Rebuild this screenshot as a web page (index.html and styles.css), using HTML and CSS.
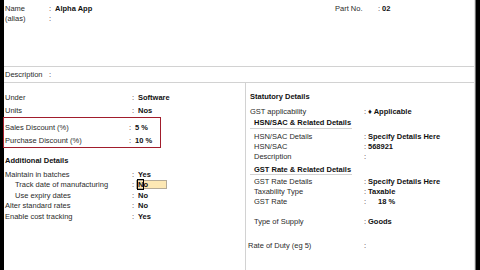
FILE: index.html
```html
<!DOCTYPE html>
<html>
<head>
<meta charset="utf-8">
<link rel="stylesheet" href="styles.css">
</head>
<body>
<div class="frame">
  <div class="bar-left"></div>
  <main class="sheet">
    <header class="head">
      <div class="hrow">
        <span class="hlbl">Name</span><span class="hcolon">:</span><b class="hval">Alpha App</b>
        <span class="plbl">Part No.</span><span class="pcolon">:</span><b>02</b>
      </div>
      <div class="hrow">
        <span class="hlbl">(alias)</span><span class="hcolon">:</span>
      </div>
    </header>
    <div class="desc">
      <span class="hlbl">Description</span><span class="hcolon">:</span>
    </div>
    <div class="cols">
      <section class="left">
        <div class="lrow r13"><span class="llbl">Under</span><span class="lcolon">:</span><b>Software</b></div>
        <div class="lrow r13"><span class="llbl">Units</span><span class="lcolon">:</span><b>Nos</b></div>
        <div class="redbox">
          <div class="lrow r13"><span class="llbl box">Sales Discount (%)</span><span class="lcolon">:</span><b>5 %</b></div>
          <div class="lrow r13"><span class="llbl box">Purchase Discount (%)</span><span class="lcolon">:</span><b>10 %</b></div>
        </div>
        <div class="lhead">Additional Details</div>
        <div class="lrow r10 first"><span class="llbl">Maintain in batches</span><span class="lcolon">:</span><b>Yes</b></div>
        <div class="lrow r10"><span class="llbl ind">Track date of manufacturing</span><span class="lcolon">:</span><span class="input"><b><span class="cursor">N</span>o</b></span></div>
        <div class="lrow r10"><span class="llbl ind">Use expiry dates</span><span class="lcolon">:</span><b>No</b></div>
        <div class="lrow r10"><span class="llbl">Alter standard rates</span><span class="lcolon">:</span><b>No</b></div>
        <div class="lrow r10"><span class="llbl">Enable cost tracking</span><span class="lcolon">:</span><b>Yes</b></div>
      </section>
      <section class="right">
        <div class="rhead">Statutory Details</div>
        <div class="rrow gstapp"><span class="rlbl">GST applicability</span><span class="rcolon">:</span><b><span class="dia">&#9830;</span> Applicable</b></div>
        <div class="subhead">HSN/SAC &amp; Related Details</div>
        <div class="rrow first"><span class="rlbl ind">HSN/SAC Details</span><span class="rcolon">:</span><b>Specify Details Here</b></div>
        <div class="rrow"><span class="rlbl ind">HSN/SAC</span><span class="rcolon">:</span><b>568921</b></div>
        <div class="rrow"><span class="rlbl ind">Description</span><span class="rcolon">:</span></div>
        <div class="subhead sub2">GST Rate &amp; Related Details</div>
        <div class="rrow first2"><span class="rlbl ind">GST Rate Details</span><span class="rcolon">:</span><b>Specify Details Here</b></div>
        <div class="rrow"><span class="rlbl ind">Taxability Type</span><span class="rcolon">:</span><b>Taxable</b></div>
        <div class="rrow"><span class="rlbl ind">GST Rate</span><span class="rcolon">:</span><b class="rate">18 %</b></div>
        <div class="rrow supply"><span class="rlbl ind">Type of Supply</span><span class="rcolon">:</span><b>Goods</b></div>
        <div class="rrow duty"><span class="rlbl out">Rate of Duty (eg 5)</span><span class="rcolon">:</span></div>
      </section>
    </div>
  </main>
  <div class="bar-right"></div>
</div>
</body>
</html>
```

FILE: styles.css
```css
* { box-sizing: border-box; }
html, body { margin: 0; padding: 0; background: #fff; }
body {
  width: 480px;
  height: 270px;
  overflow: hidden;
  font-family: "Liberation Sans", Arial, sans-serif;
  font-size: 7.5px;
  color: #2b2b2b;
}
b { color: #111; font-weight: bold; }

.frame { display: flex; width: 480px; height: 270px; }
.bar-left { width: 4px; background: #000; flex: none; }
.bar-right {
  width: 6px;
  flex: none;
  background: linear-gradient(to right, #e6e6e6 0, #e0e0e0 1px, #000 2px, #000 100%);
}
.sheet { flex: 1; display: flex; flex-direction: column; min-width: 0; }

/* header */
.head { height: 67px; padding-top: 3px; border-bottom: 1px solid #d2d2d2; }
.hrow { display: flex; align-items: center; height: 10px; padding-left: 1px; }
.hlbl { width: 44px; }
.hcolon { width: 6px; }
.hval { width: 280px; }
.plbl { width: 43px; }
.pcolon { width: 4px; }

.desc {
  height: 16px;
  display: flex;
  align-items: center;
  padding-left: 1px;
  border-bottom: 1px solid #d2d2d2;
}

/* columns */
.cols { flex: 1; display: grid; grid-template-columns: 242px 1fr; }
.left { border-right: 1px solid #d2d2d2; padding-top: 8px; }
.lrow { display: flex; align-items: center; padding-left: 1px; }
.r13 { height: 13px; }
.r10 { height: 10.5px; }
.llbl { width: 127px; }
.llbl.ind { padding-left: 10px; }
.llbl.box { width: 124px; }
.lcolon { width: 6px; }
.redbox {
  margin-left: -1px;
  width: 158px;
  border: 1px solid #a11d2c;
  padding-top: 3px;
  height: 31px;
}
.redbox .lrow { padding-left: 1px; }
.lhead { height: 14px; margin-top: 5px; padding-left: 1px; font-weight: bold; color: #111; display: flex; align-items: center; }
.lrow.first { margin-top: 2px; }
.input {
  display: inline-flex;
  align-items: center;
  margin-left: -2px;
  width: 31px;
  height: 9px;
  padding-left: 1px;
  background: #fde8b4;
  border: 1px solid #b5ab98;
}
.cursor { outline: 1px solid #000; outline-offset: -0.5px; }

.right { padding-top: 7px; }
.rhead { height: 12px; padding-left: 4px; font-weight: bold; color: #111; display: flex; align-items: center; }
.rrow { display: flex; align-items: center; height: 10px; }
.rlbl { width: 118px; padding-left: 4px; }
.rlbl.ind { padding-left: 8px; }
.rlbl.out { padding-left: 2px; }
.rcolon { width: 4px; }
.rrow.gstapp { height: 12px; margin-top: 3px; }
.dia { font-size: 7.5px; }
.subhead {
  margin-left: 4px;
  width: 102px;
  height: 12px;
  padding-left: 4px;
  font-weight: bold;
  color: #111;
  border-bottom: 1px solid #d2d2d2;
  display: flex;
  align-items: center;
}
.subhead.sub2 { margin-top: 3px; height: 11px; }
.rrow.first { margin-top: 2px; }
.rrow.first2 { margin-top: 1px; }
.rate { padding-left: 10px; }
.rrow.supply { margin-top: 10px; }
.rrow.duty { margin-top: 14px; }
```
